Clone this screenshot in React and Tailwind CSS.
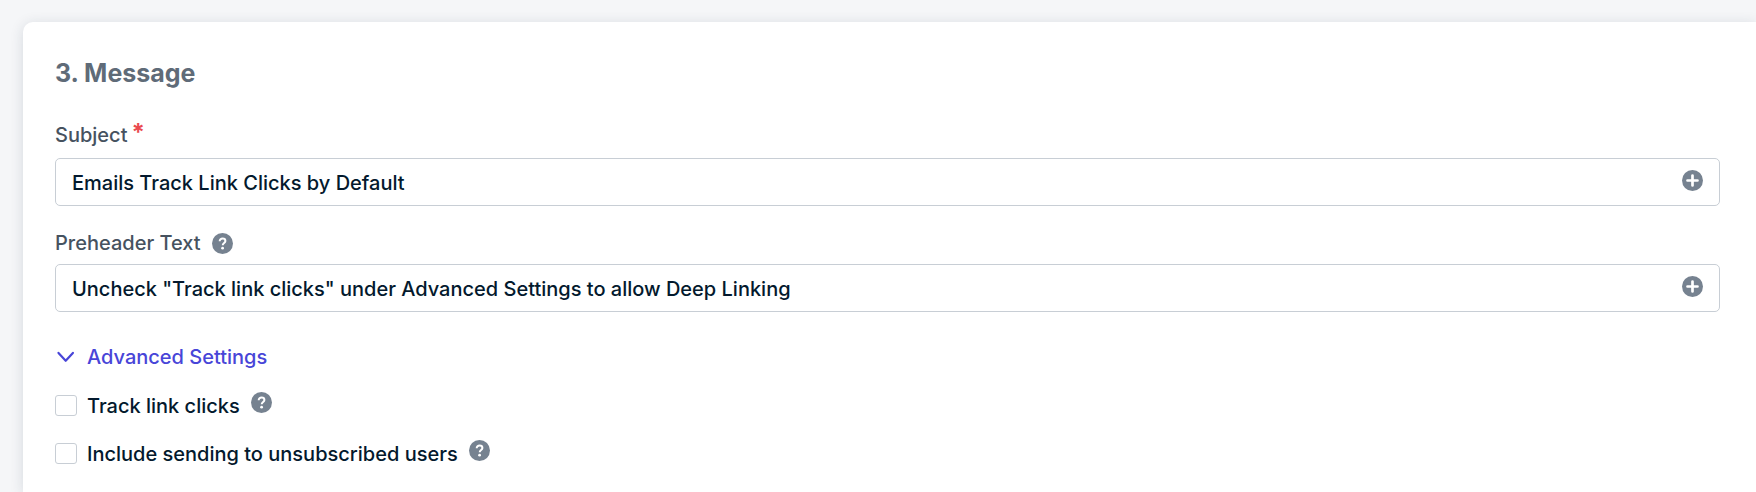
import React, { useState } from "react";

const HelpIcon = ({ label }) => (
  <svg className="size-[21px] shrink-0" viewBox="0 0 21 21" role="img" aria-label={label}>
    <circle cx="10.5" cy="10.5" r="10.5" fill="#768290" />
    <path
      d="M7.7 8.2C7.7 6.6 8.9 5.6 10.6 5.6C12.2 5.6 13.4 6.5 13.4 8C13.4 10 10.7 10 10.7 12.3"
      fill="none"
      stroke="#fff"
      strokeWidth="2"
    />
    <circle cx="10.6" cy="15.2" r="1.4" fill="#fff" />
  </svg>
);

const PlusIcon = () => (
  <svg className="size-[21px]" viewBox="0 0 21 21" aria-hidden="true">
    <circle cx="10.5" cy="10.5" r="10.5" fill="#768290" />
    <path d="M10.5 5.5V15.5M5.5 10.5H15.5" stroke="#fff" strokeWidth="2.7" strokeLinecap="round" />
  </svg>
);

const TextField = ({ id, value, onChange, required }) => (
  <div className="flex h-12 items-center rounded-[5px] border border-[#c8ced5] bg-white px-4">
    <input
      id={id}
      type="text"
      value={value}
      required={required}
      onChange={(e) => onChange(e.target.value)}
      className="min-w-0 flex-1 bg-transparent pt-0.5 text-xl leading-7 font-medium text-[#03192d] outline-none"
    />
    <button type="button" aria-label="Insert variable" className="mb-1 cursor-pointer">
      <PlusIcon />
    </button>
  </div>
);

const CheckRow = ({ id, label, checked, onChange }) => (
  <div className="flex h-7 items-center">
    <input
      id={id}
      type="checkbox"
      checked={checked}
      onChange={(e) => onChange(e.target.checked)}
      className="mb-px h-[21px] w-[22px] shrink-0 appearance-none rounded-[3px] border border-[#c8ced5] bg-white checked:bg-[#4845d8]"
    />
    <label htmlFor={id} className="ml-2.5 text-xl leading-7 font-medium text-[#03192d]">
      {label}
    </label>
    <div className="mb-2 ml-[11px]">
      <HelpIcon label={`About ${label}`} />
    </div>
  </div>
);

const App = () => {
  const [subject, setSubject] = useState("Emails Track Link Clicks by Default");
  const [preheader, setPreheader] = useState(
    'Uncheck "Track link clicks" under Advanced Settings to allow Deep Linking'
  );
  const [showAdvanced, setShowAdvanced] = useState(true);
  const [trackClicks, setTrackClicks] = useState(false);
  const [includeUnsubscribed, setIncludeUnsubscribed] = useState(false);

  return (
    <main className="flex min-h-screen flex-col bg-[#f5f6f8] pl-[23px] pt-[22px] font-[Inter,sans-serif]">
      <section className="flex-1 rounded-tl-[10px] bg-white pb-6 pl-8 pr-9 pt-[35px] shadow-[0_2px_14px_rgba(30,50,70,0.14)]">
        <h2 className="text-[25px] font-bold leading-8 text-[#5f6b78]">3. Message</h2>

        <div className="mt-8">
          <label htmlFor="subject" className="mb-[9px] flex h-7 text-xl leading-7 font-medium text-[#46525f]">
            Subject
            <span className="ml-1 text-2xl font-bold leading-6 text-[#ea4a4f]">*</span>
          </label>
          <TextField id="subject" value={subject} onChange={setSubject} required />
        </div>

        <div className="mt-[23px]">
          <div className="mb-[7px] flex h-7 items-center gap-[11px]">
            <label htmlFor="preheader" className="text-xl leading-7 font-medium text-[#46525f]">
              Preheader Text
            </label>
            <HelpIcon label="About Preheader Text" />
          </div>
          <TextField id="preheader" value={preheader} onChange={setPreheader} />
        </div>

        <button
          type="button"
          aria-expanded={showAdvanced}
          onClick={() => setShowAdvanced(!showAdvanced)}
          className="mt-[31px] flex h-7 cursor-pointer items-center gap-2.5 text-xl leading-7 font-medium text-[#4845d8]"
        >
          <svg className="size-[22px]" viewBox="0 0 22 22" fill="none" aria-hidden="true">
            <path d="M3.5 6.9L10.7 14.8L17.9 6.9" stroke="currentColor" strokeWidth="2.2" strokeLinecap="round" strokeLinejoin="round" />
          </svg>
          Advanced Settings
        </button>

        {showAdvanced && (
          <div className="mt-[21px] flex flex-col gap-5">
            <CheckRow id="track-clicks" label="Track link clicks" checked={trackClicks} onChange={setTrackClicks} />
            <CheckRow
              id="include-unsubscribed"
              label="Include sending to unsubscribed users"
              checked={includeUnsubscribed}
              onChange={setIncludeUnsubscribed}
            />
          </div>
        )}
      </section>
    </main>
  );
};

export default App;
